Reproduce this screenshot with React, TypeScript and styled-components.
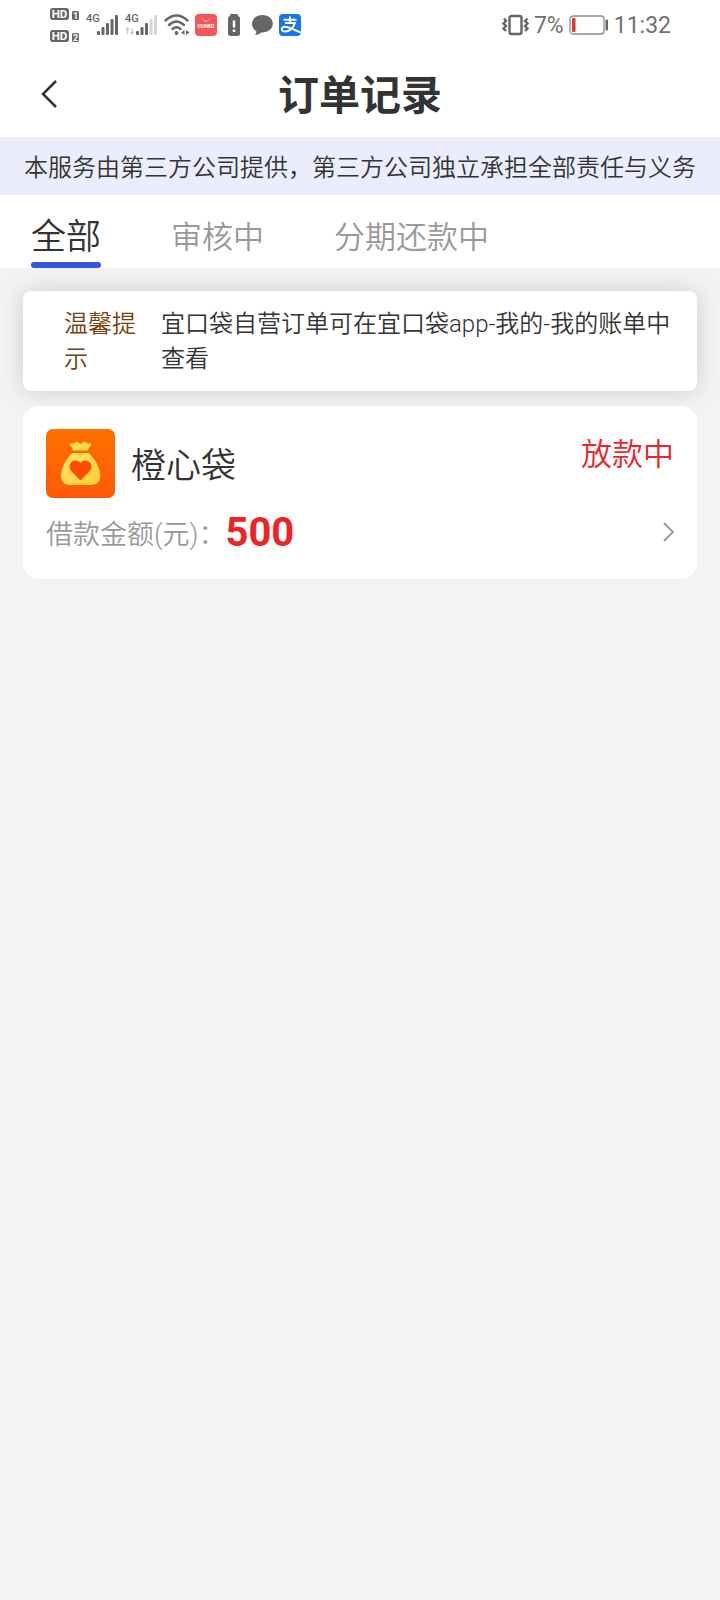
import React, { useState } from "react";
import styled, { createGlobalStyle } from "styled-components";

const GlobalStyle = createGlobalStyle`
  * { box-sizing: border-box; }
  body {
    margin: 0;
    background: #f3f3f3;
    color: #333333;
    font-family: Roboto, "Noto Sans CJK SC", sans-serif;
    font-weight: 350;
  }
  h1, h2, p, dl, dt, dd { margin: 0; }
  button {
    border: 0;
    padding: 0;
    background: none;
    color: inherit;
    font-family: inherit;
    font-weight: inherit;
    cursor: pointer;
  }
  svg { display: block; flex: none; }
`;

const Page = styled.div`
  display: flex;
  flex-direction: column;
  min-height: 100vh;
  background: #f3f3f3;
`;

const StatusBar = styled.div`
  display: flex;
  align-items: center;
  justify-content: space-between;
  height: 50px;
  padding: 0 49px 0 50px;
  background: #ffffff;
  color: #707070;
`;

const StatusGroup = styled.div<{ $gap: number }>`
  display: flex;
  align-items: center;
  gap: ${(p) => p.$gap}px;
  font-size: 23px;
`;

const StatusText = styled.span`
  padding-top: 2px;
  line-height: 48px;
  font-weight: 400;
`;

const TitleBar = styled.header`
  display: grid;
  grid-template-columns: 96px 1fr 96px;
  align-items: center;
  height: 87px;
  background: #ffffff;
`;

const BackButton = styled.button`
  display: flex;
  align-items: center;
  height: 86px;
  padding-left: 40px;
`;

const Title = styled.h1`
  padding-top: 4px;
  font-size: 41px;
  line-height: 60px;
  font-weight: 700;
  text-align: center;
`;

const Disclaimer = styled.p`
  padding: 14px 0 9px;
  background: #ebedfc;
  font-size: 24px;
  line-height: 35px;
  text-align: center;
  white-space: nowrap;
`;

const Tabs = styled.div`
  display: flex;
  gap: 70px;
  height: 73px;
  padding: 0 31px;
  background: #ffffff;
`;

const Tab = styled.button<{ $active: boolean }>`
  display: flex;
  align-items: center;
  padding-top: 18px;
  border-bottom: 6px solid transparent;
  font-size: ${(p) => (p.$active ? 35 : 31)}px;
  line-height: 46px;
  color: ${(p) => (p.$active ? "#333333" : "#999999")};
  position: relative;
  &::after {
    content: "";
    position: absolute;
    left: 0;
    right: 0;
    bottom: -6px;
    height: 6px;
    border-radius: 3px;
    background: ${(p) => (p.$active ? "#3853de" : "transparent")};
  }
`;

const Content = styled.main`
  display: flex;
  flex-direction: column;
  gap: 15px;
  padding: 23px;
`;

const Tip = styled.section`
  display: flex;
  gap: 24px;
  padding: 16px 16px 14px 41px;
  border-radius: 8px;
  background: #ffffff;
  box-shadow: 0 0 24px rgba(0, 0, 0, 0.16);
  font-size: 24px;
  line-height: 35px;
`;

const TipLabel = styled.h2`
  flex: none;
  width: 73px;
  font-size: 24px;
  font-weight: inherit;
  color: #7a3e0c;
`;

const TipText = styled.p`
  flex: 1;
`;

const OrderCard = styled.article`
  display: flex;
  flex-direction: column;
  gap: 9px;
  padding: 23px 23px 22px;
  border-radius: 16px;
  background: #ffffff;
`;

const OrderHead = styled.div`
  display: flex;
  align-items: center;
  gap: 16px;
`;

const OrderName = styled.h2`
  flex: 1;
  padding-top: 6px;
  font-size: 35px;
  line-height: 50px;
  font-weight: inherit;
`;

const OrderState = styled.span`
  align-self: flex-start;
  font-size: 31px;
  line-height: 52px;
  color: #ec2427;
`;

const OrderFoot = styled.div`
  display: flex;
  align-items: center;
  justify-content: space-between;
`;

const Amount = styled.dl`
  display: flex;
  align-items: center;
`;

const AmountLabel = styled.dt`
  padding-top: 6px;
  font-size: 27px;
  line-height: 44px;
  color: #999999;
`;

const AmountValue = styled.dd`
  padding-top: 2px;
  font-size: 40px;
  line-height: 48px;
  font-weight: 700;
  color: #ec2427;
`;

function HdIcon() {
  return (
    <svg width="32" height="36" viewBox="0 0 32 36" fontFamily="Roboto, sans-serif" fontWeight="700">
      {[1, 23].map((y, i) => (
        <g key={y} transform={`translate(0 ${y})`}>
          <rect x="0" y="0" width="19" height="12" rx="3" fill="#666" />
          <text x="9.500" y="10" fontSize="11.500" fill="#fff" textAnchor="middle">HD</text>
          <rect x="22" y="3" width="7" height="9" rx="1.500" fill="#666" />
          <text x="25.500" y="10.500" fontSize="9" fill="#fff" textAnchor="middle">{i + 1}</text>
        </g>
      ))}
    </svg>
  );
}

function SignalIcon({ bars, data }: { bars: number; data?: boolean }) {
  return (
    <svg width="35" height="24" viewBox="0 0 35 24" fill="#666">
      <text x="0" y="9" fontSize="11" fontWeight="500" fontFamily="Roboto, sans-serif">4G</text>
      {[4, 8, 12, 16, 20].map((h, i) => (
        <rect key={h} x={11 + i * 4.5} y={22 - h} width="3" height={h} rx="1" fill={i < bars ? "#666" : "#d6d6d6"} />
      ))}
      {data && <path d="M2.500 21v-6M1 17l1.500-2L4 17M7 15v6M5.500 19L7 21l1.500-2" fill="none" stroke="#c8c8c8" strokeWidth="1.300" />}
    </svg>
  );
}

function WifiIcon() {
  return (
    <svg width="27" height="22" viewBox="0 0 27 22" fill="none" stroke="#666" strokeWidth="2.400" strokeLinecap="round">
      <path d="M1.500 6.500Q12.500-3.500 23.500 6.500M5 11Q12.500 4 20 11M8.500 15Q12.500 11.500 16.500 15" />
      <circle cx="12.500" cy="19" r="1.900" fill="#666" stroke="none" />
      <path d="M20.500 16v5l-3.500-2.500zM22 16v5l3.500-2.500z" fill="#666" stroke="none" />
    </svg>
  );
}

function HuaweiIcon() {
  return (
    <svg width="22" height="22" viewBox="0 0 22 22">
      <rect width="22" height="22" rx="4" fill="#f5565a" />
      <path d="M7 4.500q4 6 8 0" fill="none" stroke="#fbb" strokeWidth="1" />
      <text x="11" y="14" fontSize="4.500" fontWeight="700" fontFamily="Roboto, sans-serif" fill="#fff" textAnchor="middle">HUAWEI</text>
    </svg>
  );
}

function LowBatteryIcon() {
  return (
    <svg width="27" height="22" viewBox="0 0 27 22" fill="#666">
      <rect x="9" y="0" width="8" height="4" rx="1" />
      <rect x="7" y="2" width="12" height="20" rx="2.500" />
      <path d="M13 6.500v7M13 15.500v2.500" stroke="#fff" strokeWidth="2.400" />
    </svg>
  );
}

function ChatIcon() {
  return (
    <svg width="23" height="22" viewBox="0 0 23 22" fill="#666">
      <path d="M10.500 1C4.500 1 0 4.800 0 9.800c0 3.300 1.800 5.900 4.300 7.400.2 1.600-.5 2.700-1.300 3.800 2.600-.1 4.700-1 6.200-2.500 6.500.4 11.600-3.500 11.600-8.700C20.800 4.800 16.500 1 10.500 1z" />
    </svg>
  );
}

function PayIcon() {
  return (
    <svg width="22" height="22" viewBox="0 0 22 22">
      <rect width="22" height="22" rx="4" fill="#1a73f0" />
      <path d="M4.500 5.800h13M11 2.500v6.500M6 9h10C14.500 13.500 10.500 17.500 6.500 17.500c-5.500 0-4.500-5-.5-4.700C10 13 14 15.500 22 18.500" fill="none" stroke="#fff" strokeWidth="1.900" />
    </svg>
  );
}

function VibrateIcon() {
  return (
    <svg width="27" height="22" viewBox="0 0 27 22" fill="none" stroke="#666">
      <rect x="7.500" y="2" width="12" height="18" rx="2" strokeWidth="2.400" />
      <path d="M2 4.500L4 7 1.500 9.500 4 12 1.500 14.500 4 17M25.500 4.500L23 7l2.500 2.500L23 12l2.500 2.500L23 17" strokeWidth="2.400" />
    </svg>
  );
}

function BatteryIcon() {
  return (
    <svg width="40" height="20" viewBox="0 0 40 20">
      <rect x="1" y="1" width="34" height="18" rx="3" fill="#fff" stroke="#8c8c8c" strokeWidth="1.300" />
      <rect x="3" y="3" width="3.500" height="14" rx="1" fill="#dc3a2a" />
      <rect x="36.500" y="4.500" width="2.500" height="11" rx="1" fill="#666" />
    </svg>
  );
}

function MoneyBagIcon() {
  return (
    <svg width="69" height="69" viewBox="0 0 69 69" role="img" aria-label="橙心袋">
      <defs>
        <linearGradient id="tile" x1="0" y1="0" x2="0" y2="1">
          <stop offset="0" stopColor="#ff7000" />
          <stop offset="1" stopColor="#ff5a0a" />
        </linearGradient>
        <linearGradient id="bag" x1="0" y1="0" x2="1" y2="1">
          <stop offset="0" stopColor="#ffe65c" />
          <stop offset="1" stopColor="#ffcb38" />
        </linearGradient>
      </defs>
      <rect width="69" height="69" rx="7" fill="url(#tile)" />
      <path d="M27 21.500c-.3-2-1.200-3.300-2.700-4.700-1.200-1.500-.2-2.900 1.600-2.400 1.500.3 2.400-.2 3.400-1.200 1.200-.9 2.300-.6 3.200.4 1.200 1.600 2.800 1.600 4 0 .9-1 2.100-1.300 3.200-.4 1 1 1.900 1.500 3.400 1.200 1.900-.4 2.700.9 1.700 2.400-1.500 1.400-2.400 2.800-2.700 4.700z" fill="url(#bag)" />
      <path d="M26.500 24h16c5 4 11.800 14 11.800 22.500 0 6.500-3.500 9.500-9.500 9.500H24.500c-6 0-9.500-3-9.500-9.500C15 38 21.500 28 26.500 24z" fill="url(#bag)" />
      <path d="M34.500 51.500L25.800 42.800c-2.900-3-2.800-7-.5-9.500 2.500-2.700 6.700-2.500 9.200.5 2.500-3 6.700-3.200 9.200-.5 2.300 2.500 2.400 6.500-.5 9.500z" fill="#ff4d08" />
    </svg>
  );
}

const tabNames = ["全部", "审核中", "分期还款中"];

export default function App() {
  const [active, setActive] = useState(0);
  return (
    <Page>
      <GlobalStyle />
      <StatusBar>
        <StatusGroup $gap={4}>
          <HdIcon />
          <SignalIcon bars={5} />
          <SignalIcon bars={3} data />
          <WifiIcon />
          <HuaweiIcon />
          <LowBatteryIcon />
          <ChatIcon />
          <PayIcon />
        </StatusGroup>
        <StatusGroup $gap={5}>
          <VibrateIcon />
          <StatusText>7%</StatusText>
          <BatteryIcon />
          <StatusText>11:32</StatusText>
        </StatusGroup>
      </StatusBar>
      <TitleBar>
        <BackButton type="button" aria-label="返回">
          <svg width="18" height="30" viewBox="0 0 18 30" fill="none" stroke="#333" strokeWidth="2.500">
            <path d="M16 2L3 15l13 13" />
          </svg>
        </BackButton>
        <Title>订单记录</Title>
      </TitleBar>
      <Disclaimer>本服务由第三方公司提供，第三方公司独立承担全部责任与义务</Disclaimer>
      <Tabs role="tablist">
        {tabNames.map((name, i) => (
          <Tab key={name} type="button" role="tab" aria-selected={i === active} $active={i === active} onClick={() => setActive(i)}>
            {name}
          </Tab>
        ))}
      </Tabs>
      <Content>
        <Tip>
          <TipLabel>温馨提示</TipLabel>
          <TipText>宜口袋自营订单可在宜口袋app-我的-我的账单中查看</TipText>
        </Tip>
        <OrderCard>
          <OrderHead>
            <MoneyBagIcon />
            <OrderName>橙心袋</OrderName>
            <OrderState>放款中</OrderState>
          </OrderHead>
          <OrderFoot>
            <Amount>
              <AmountLabel>借款金额(元)：</AmountLabel>
              <AmountValue>500</AmountValue>
            </Amount>
            <button type="button" aria-label="查看订单">
              <svg width="13" height="22" viewBox="0 0 13 22" fill="none" stroke="#999" strokeWidth="1.800">
                <path d="M3 2l9 9-9 9" />
              </svg>
            </button>
          </OrderFoot>
        </OrderCard>
      </Content>
    </Page>
  );
}
